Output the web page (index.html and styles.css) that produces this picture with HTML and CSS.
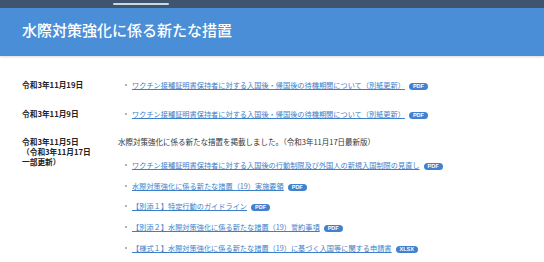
FILE: index.html
```html
<!DOCTYPE html>
<html lang="ja">
<head>
  <meta charset="UTF-8">
  <meta name="viewport" content="width=device-width, initial-scale=1.0">
  <title>水際対策強化に係る新たな措置</title>
  <link rel="stylesheet" href="styles.css">
</head>
<body>
  <div class="topbar"><span class="handle"></span></div>
  <header class="page-header">
    <h1>水際対策強化に係る新たな措置</h1>
  </header>

  <main class="updates">
    <!-- 11/19 -->
    <div class="row">
      <div class="date">令和3年11月19日</div>
      <div class="body">
        <ul class="links">
          <li><a href="#">ワクチン接種証明書保持者に対する入国後・帰国後の待機期間について（別紙更新）</a><span class="badge">PDF</span></li>
        </ul>
      </div>
    </div>

    <!-- 11/9 -->
    <div class="row">
      <div class="date">令和3年11月9日</div>
      <div class="body">
        <ul class="links">
          <li><a href="#">ワクチン接種証明書保持者に対する入国後・帰国後の待機期間について（別紙更新）</a><span class="badge">PDF</span></li>
        </ul>
      </div>
    </div>

    <!-- 11/5 -->
    <div class="row">
      <div class="date">令和3年11月5日<br>（令和3年11月17日<br>一部更新）</div>
      <div class="body">
        <p class="intro">水際対策強化に係る新たな措置を掲載しました。（令和3年11月17日最新版）</p>
        <ul class="links">
          <li><a href="#">ワクチン接種証明書保持者に対する入国後の行動制限及び外国人の新規入国制限の見直し</a><span class="badge">PDF</span></li>
          <li><a href="#">水際対策強化に係る新たな措置（19）実施要領</a><span class="badge">PDF</span></li>
          <li><a href="#">【別添１】特定行動のガイドライン</a><span class="badge">PDF</span></li>
          <li><a href="#">【別添２】水際対策強化に係る新たな措置（19）誓約事項</a><span class="badge">PDF</span></li>
          <li><a href="#">【様式１】水際対策強化に係る新たな措置（19）に基づく入国等に関する申請書</a><span class="badge">XLSX</span></li>
        </ul>
      </div>
    </div>
  </main>
</body>
</html>
```

FILE: styles.css
```css
/* General */
body {
  margin: 0;
  font-family: "Noto Sans CJK JP", "Noto Sans", sans-serif;
  background: #fff;
  color: #333;
}

/* Top bar */
.topbar {
  height: 8px;
  background: #3e546f;
  display: flex;
  align-items: center;
  padding-left: 113px;
}

.handle {
  width: 56px;
  height: 2px;
  border-radius: 1px;
  background: #cfd6de;
}

/* Header */
.page-header {
  height: 48px;
  background: #4a8ed7;
  display: flex;
  align-items: center;
  padding: 0 22px 6px;
  box-sizing: border-box;
  box-shadow: 0 1px 2px rgba(0, 0, 0, 0.15);
}

.page-header h1 {
  margin: 0;
  color: #fff;
  font-size: 15px;
  font-weight: 500;
  line-height: 1;
}

/* Updates list */
.updates {
  padding: 24px 22px 0;
  display: flex;
  flex-direction: column;
  gap: 18.5px;
}

.row {
  display: flex;
}

.date {
  width: 96px;
  flex-shrink: 0;
  font-size: 7.7px;
  font-weight: 700;
  line-height: 10px;
  color: #222;
}

.body {
  flex: 1;
}

.intro {
  margin: 0 0 13px;
  font-size: 7.5px;
  line-height: 10px;
  color: #333;
}

.links {
  list-style: none;
  margin: 0;
  padding: 0 0 0 14px;
  display: flex;
  flex-direction: column;
  gap: 10.7px;
}

.links li {
  position: relative;
  font-size: 7.2px;
  line-height: 10px;
}

.links li::before {
  content: "";
  position: absolute;
  left: -7px;
  top: 4px;
  width: 2px;
  height: 2px;
  border-radius: 50%;
  background: #999;
}

.links a {
  color: #3d7ec8;
  text-decoration: underline;
}

.badge {
  display: inline-block;
  margin-left: 4px;
  padding: 0 4px;
  height: 7px;
  line-height: 7px;
  border-radius: 4px;
  background: #3f82d0;
  color: #fff;
  font-family: "Liberation Sans", Arial, sans-serif;
  font-size: 5.5px;
  font-weight: 700;
  vertical-align: 0;
}
```
